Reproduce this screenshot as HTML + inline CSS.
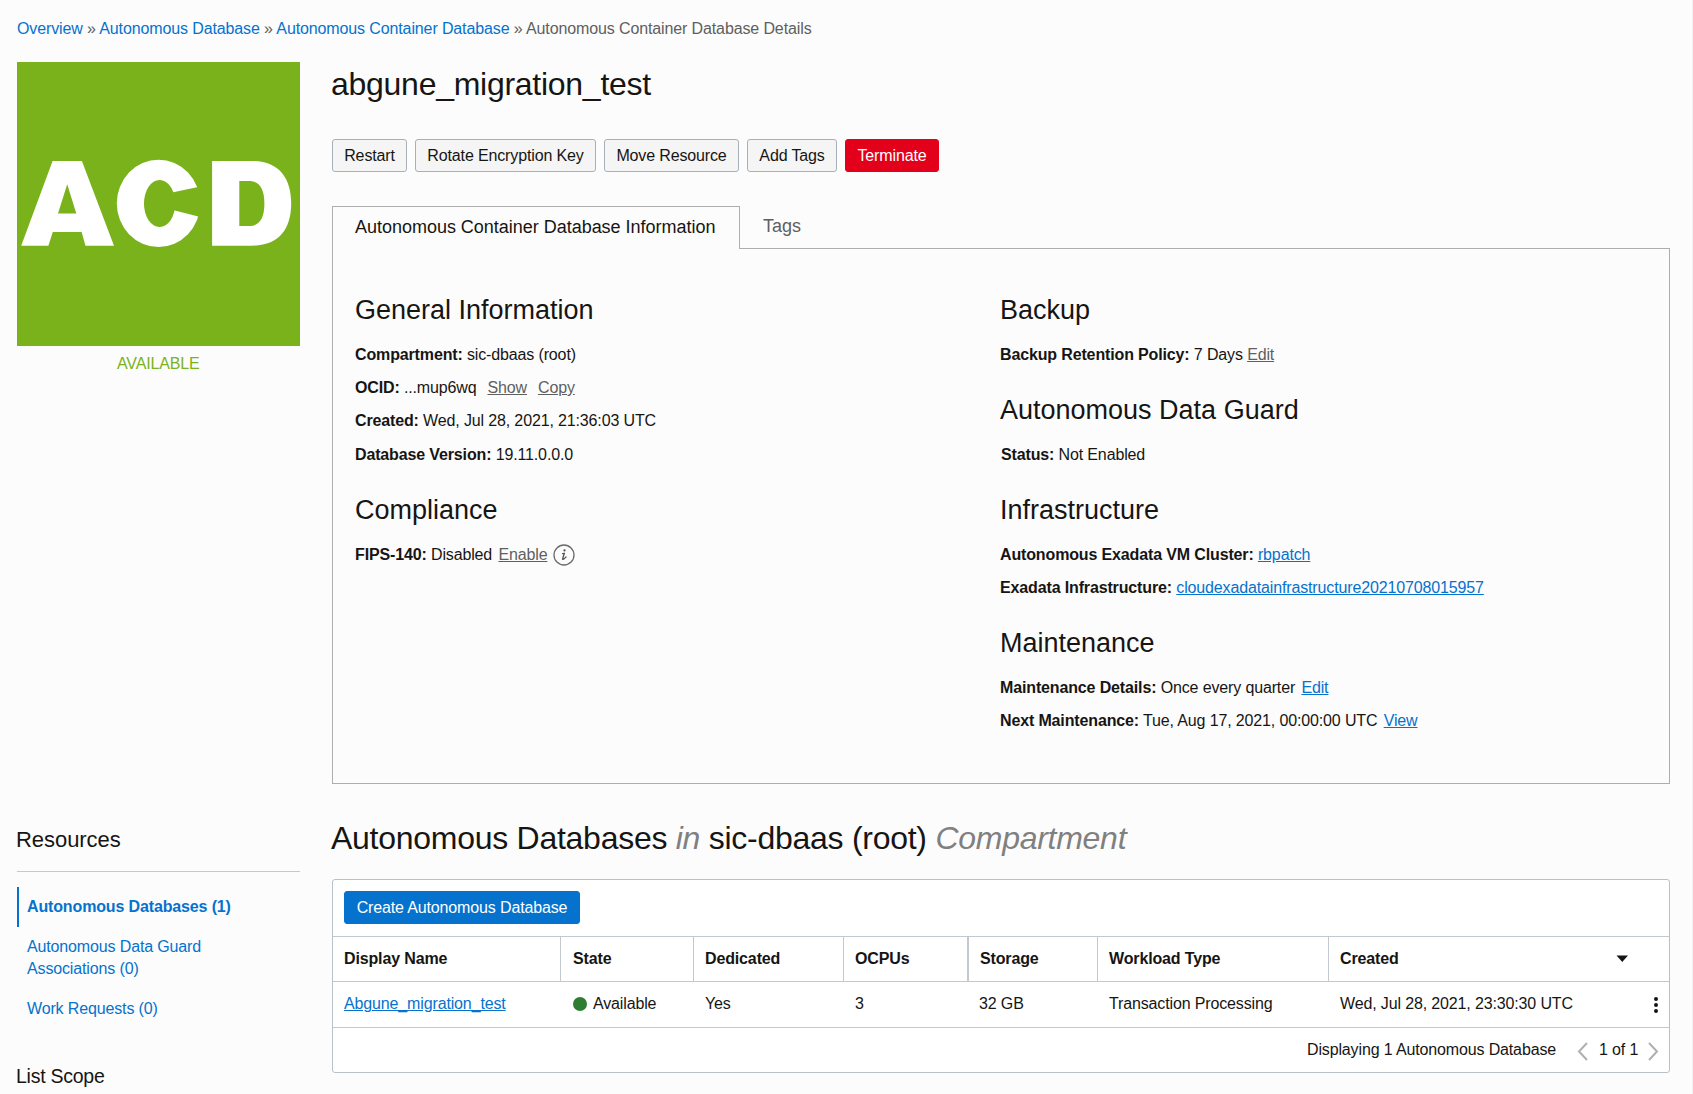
<!DOCTYPE html>
<html><head><meta charset="utf-8"><style>
html,body{margin:0;padding:0;}
body{width:1693px;height:1094px;overflow:hidden;background:#fcfcfc;position:relative;font-family:"Liberation Sans", sans-serif;color:#161513;}
.t{position:absolute;white-space:nowrap;}
.r{position:absolute;}
b{font-weight:700;}
.btn{position:absolute;top:139px;height:33px;box-sizing:border-box;border:1px solid #a9b0b9;border-radius:3px;background:#f5f5f5;color:#161513;font-size:16px;line-height:31px;text-align:center;letter-spacing:-0.14px;white-space:nowrap;}
.btn.red{background:#e2001b;border-color:#e2001b;color:#fff;}
.btn.blue{background:#0572ce;border-color:#0572ce;color:#fff;}
</style></head><body>
<div class="t" style="left:17px;top:21px;font-size:16px;line-height:16px;letter-spacing:-0.12px;"><span style="color:#0572ce">Overview</span><span style="color:#5f5f5f"> » </span><span style="color:#0572ce">Autonomous Database</span><span style="color:#5f5f5f"> » </span><span style="color:#0572ce">Autonomous Container Database</span><span style="color:#5f5f5f"> » </span><span style="color:#5f5f5f">Autonomous Container Database Details</span></div>
<div class="r" style="left:17px;top:62px;width:283px;height:284px;background:#79b21a;"></div>
<svg class="r" style="left:0;top:0" width="320" height="360"><g fill="#fff" fill-rule="evenodd">
<path d="M21.2,245.7 L52.6,160.9 L81.9,160.9 L114,245.7 L85.5,245.7 L81.6,231.9 L52.8,231.9 L48.4,245.7 Z M58,213.6 L76.3,213.6 L67.2,184.3 Z"/>
<ellipse cx="158.5" cy="203.35" rx="41.7" ry="43.65"/>
</g>
<ellipse cx="159.6" cy="203.5" rx="15.6" ry="23.6" fill="#79b21a"/>
<path d="M165,193.9 L210,184.6 L210,219.4 L165,208.1 Z" fill="#79b21a"/>
<path fill="#fff" fill-rule="evenodd" d="M212.1,160.9 L252,160.9 C279,160.9 291.2,178 291.2,203.3 C291.2,229 279,245.7 252,245.7 L212.1,245.7 Z M239.3,181 L249,181 C259,181 264.4,188 264.4,203.5 C264.4,219 259,226.1 249,226.1 L239.3,226.1 Z"/>
</svg>
<div class="t" style="left:117px;top:356px;font-size:16px;line-height:16px;color:#7ab31b;letter-spacing:-0.14px;">AVAILABLE</div>
<div class="t" style="left:331px;top:68px;font-size:32px;line-height:32px;color:#161513;letter-spacing:-0.27px;">abgune_migration_test</div>
<div class="btn" style="left:332px;width:75px;">Restart</div>
<div class="btn" style="left:415px;width:181px;">Rotate Encryption Key</div>
<div class="btn" style="left:604px;width:135px;">Move Resource</div>
<div class="btn" style="left:747px;width:90px;">Add Tags</div>
<div class="btn red" style="left:845px;width:94px;">Terminate</div>
<div class="r" style="left:332px;top:248px;width:1338px;height:536px;border:1px solid #adadad;box-sizing:border-box;"></div>
<div class="r" style="left:332px;top:206px;width:408px;height:43px;border:1px solid #adadad;border-bottom:none;box-sizing:border-box;background:#fcfcfc;"></div>
<div class="t" style="left:355px;top:218px;font-size:18px;line-height:18px;color:#161513;letter-spacing:-0.02px;">Autonomous Container Database Information</div>
<div class="t" style="left:763px;top:217px;font-size:18px;line-height:18px;color:#5f5f5f;">Tags</div>
<div class="t" style="left:355px;top:297px;font-size:27px;line-height:27px;color:#161513;letter-spacing:0px;">General Information</div>
<div class="t" style="left:355px;top:347px;font-size:16px;line-height:16px;color:#161513;letter-spacing:-0.14px;"><b>Compartment:</b> sic-dbaas (root)</div>
<div class="t" style="left:355px;top:380px;font-size:16px;line-height:16px;color:#161513;letter-spacing:-0.14px;"><b>OCID:</b> ...mup6wq<span style="margin-left:11px"></span><span style="color:#5f5f5f;text-decoration:underline;">Show</span><span style="margin-left:11px"></span><span style="color:#5f5f5f;text-decoration:underline;">Copy</span></div>
<div class="t" style="left:355px;top:413px;font-size:16px;line-height:16px;color:#161513;letter-spacing:-0.14px;"><b>Created:</b> Wed, Jul 28, 2021, 21:36:03 UTC</div>
<div class="t" style="left:355px;top:447px;font-size:16px;line-height:16px;color:#161513;letter-spacing:-0.14px;"><b>Database Version:</b> 19.11.0.0.0</div>
<div class="t" style="left:355px;top:497px;font-size:27px;line-height:27px;color:#161513;letter-spacing:0px;">Compliance</div>
<div class="t" style="left:355px;top:547px;font-size:16px;line-height:16px;color:#161513;letter-spacing:-0.14px;"><b>FIPS-140:</b> Disabled <span style="margin-left:2px"></span><span style="color:#5f5f5f;text-decoration:underline;">Enable</span></div>
<svg class="r" style="left:553px;top:544px" width="22" height="22" viewBox="0 0 22 22"><circle cx="11" cy="11" r="10" fill="none" stroke="#6b6b6b" stroke-width="1.3"/><path d="M9.6,9.6 L11.4,9.3 L9.7,14.4 Q9.3,15.7 10.5,15.1 Q11.9,14.2 13.1,12.9" fill="none" stroke="#555" stroke-width="1.35" stroke-linejoin="round" stroke-linecap="round"/><circle cx="11.5" cy="6.4" r="1.15" fill="#555"/></svg>
<div class="t" style="left:1000px;top:297px;font-size:27px;line-height:27px;color:#161513;letter-spacing:0px;">Backup</div>
<div class="t" style="left:1000px;top:347px;font-size:16px;line-height:16px;color:#161513;letter-spacing:-0.14px;"><b>Backup Retention Policy:</b> 7 Days <span style="color:#5f5f5f;text-decoration:underline;">Edit</span></div>
<div class="t" style="left:1000px;top:397px;font-size:27px;line-height:27px;color:#161513;letter-spacing:0px;">Autonomous Data Guard</div>
<div class="t" style="left:1001px;top:447px;font-size:16px;line-height:16px;color:#161513;letter-spacing:-0.14px;"><b>Status:</b> Not Enabled</div>
<div class="t" style="left:1000px;top:497px;font-size:27px;line-height:27px;color:#161513;letter-spacing:0px;">Infrastructure</div>
<div class="t" style="left:1000px;top:547px;font-size:16px;line-height:16px;color:#161513;letter-spacing:-0.14px;"><b>Autonomous Exadata VM Cluster:</b> <span style="color:#0572ce;text-decoration:underline;">rbpatch</span></div>
<div class="t" style="left:1000px;top:580px;font-size:16px;line-height:16px;color:#161513;letter-spacing:-0.14px;"><b>Exadata Infrastructure:</b> <span style="color:#0572ce;text-decoration:underline;">cloudexadatainfrastructure20210708015957</span></div>
<div class="t" style="left:1000px;top:630px;font-size:27px;line-height:27px;color:#161513;letter-spacing:0px;">Maintenance</div>
<div class="t" style="left:1000px;top:680px;font-size:16px;line-height:16px;color:#161513;letter-spacing:-0.14px;"><b>Maintenance Details:</b> Once every quarter <span style="margin-left:2px"></span><span style="color:#0572ce;text-decoration:underline;">Edit</span></div>
<div class="t" style="left:1000px;top:713px;font-size:16px;line-height:16px;color:#161513;letter-spacing:-0.14px;"><b>Next Maintenance:</b> Tue, Aug 17, 2021, 00:00:00 UTC <span style="margin-left:2px"></span><span style="color:#0572ce;text-decoration:underline;">View</span></div>
<div class="t" style="left:16px;top:829px;font-size:22px;line-height:22px;color:#161513;letter-spacing:-0.05px;">Resources</div>
<div class="r" style="left:17px;top:871px;width:283px;height:1px;background:#c3c9d0;"></div>
<div class="r" style="left:17px;top:887px;width:2px;height:40px;background:#0572ce;"></div>
<div class="t" style="left:27px;top:899px;font-size:16px;line-height:16px;font-weight:700;color:#0572ce;letter-spacing:-0.14px;">Autonomous Databases (1)</div>
<div class="t" style="left:27px;top:939px;font-size:16px;line-height:16px;color:#0572ce;letter-spacing:-0.14px;">Autonomous Data Guard</div>
<div class="t" style="left:27px;top:961px;font-size:16px;line-height:16px;color:#0572ce;letter-spacing:-0.14px;">Associations (0)</div>
<div class="t" style="left:27px;top:1001px;font-size:16px;line-height:16px;color:#0572ce;letter-spacing:-0.14px;">Work Requests (0)</div>
<div class="t" style="left:16px;top:1067px;font-size:18px;line-height:18px;color:#161513;letter-spacing:-0.25px;font-size:19.5px;">List Scope</div>
<div class="t" style="left:331px;top:822px;font-size:32px;line-height:32px;color:#161513;letter-spacing:-0.27px;">Autonomous Databases <i style="color:#808080">in</i> sic-dbaas (root) <i style="color:#808080">Compartment</i></div>
<div class="r" style="left:332px;top:879px;width:1338px;height:194px;border:1px solid #b9c0c8;border-radius:3px;box-sizing:border-box;background:#fff;"></div>
<div class="btn blue" style="left:344px;top:891px;width:236px;">Create Autonomous Database</div>
<div class="r" style="left:333px;top:936px;width:1336px;height:1px;background:#c2c8cf;"></div>
<div class="r" style="left:333px;top:981px;width:1336px;height:1px;background:#c2c8cf;"></div>
<div class="r" style="left:333px;top:1027px;width:1336px;height:1px;background:#c2c8cf;"></div>
<div class="r" style="left:560px;top:937px;width:1px;height:44px;background:#c2c8cf;"></div>
<div class="r" style="left:693px;top:937px;width:1px;height:44px;background:#c2c8cf;"></div>
<div class="r" style="left:843px;top:937px;width:1px;height:44px;background:#c2c8cf;"></div>
<div class="r" style="left:967px;top:937px;width:1px;height:44px;background:#c2c8cf;"></div>
<div class="r" style="left:1097px;top:937px;width:1px;height:44px;background:#c2c8cf;"></div>
<div class="r" style="left:1328px;top:937px;width:1px;height:44px;background:#c2c8cf;"></div>
<div class="r" style="left:968px;top:937px;width:1px;height:44px;background:#c2c8cf;"></div>
<div class="t" style="left:344px;top:951px;font-size:16px;line-height:16px;font-weight:700;color:#161513;letter-spacing:-0.14px;">Display Name</div>
<div class="t" style="left:573px;top:951px;font-size:16px;line-height:16px;font-weight:700;color:#161513;letter-spacing:-0.14px;">State</div>
<div class="t" style="left:705px;top:951px;font-size:16px;line-height:16px;font-weight:700;color:#161513;letter-spacing:-0.14px;">Dedicated</div>
<div class="t" style="left:855px;top:951px;font-size:16px;line-height:16px;font-weight:700;color:#161513;letter-spacing:-0.14px;">OCPUs</div>
<div class="t" style="left:980px;top:951px;font-size:16px;line-height:16px;font-weight:700;color:#161513;letter-spacing:-0.14px;">Storage</div>
<div class="t" style="left:1109px;top:951px;font-size:16px;line-height:16px;font-weight:700;color:#161513;letter-spacing:-0.14px;">Workload Type</div>
<div class="t" style="left:1340px;top:951px;font-size:16px;line-height:16px;font-weight:700;color:#161513;letter-spacing:-0.14px;">Created</div>
<svg class="r" style="left:1616px;top:955px" width="13" height="8"><path d="M0.5 0.5 L12 0.5 L6.25 7 Z" fill="#161513"/></svg>
<div class="t" style="left:344px;top:996px;font-size:16px;line-height:16px;letter-spacing:-0.14px;"><span style="color:#0572ce;text-decoration:underline;">Abgune_migration_test</span></div>
<div class="r" style="left:573px;top:997px;width:14px;height:14px;background:#2f7d32;border-radius:50%;"></div>
<div class="t" style="left:593px;top:996px;font-size:16px;line-height:16px;color:#161513;letter-spacing:-0.14px;">Available</div>
<div class="t" style="left:705px;top:996px;font-size:16px;line-height:16px;color:#161513;letter-spacing:-0.14px;">Yes</div>
<div class="t" style="left:855px;top:996px;font-size:16px;line-height:16px;color:#161513;letter-spacing:-0.14px;">3</div>
<div class="t" style="left:979px;top:996px;font-size:16px;line-height:16px;color:#161513;letter-spacing:-0.14px;">32 GB</div>
<div class="t" style="left:1109px;top:996px;font-size:16px;line-height:16px;color:#161513;letter-spacing:-0.14px;">Transaction Processing</div>
<div class="t" style="left:1340px;top:996px;font-size:16px;line-height:16px;color:#161513;letter-spacing:-0.14px;">Wed, Jul 28, 2021, 23:30:30 UTC</div>
<div class="r" style="left:1654px;top:996.5px;width:4px;height:4px;background:#161513;border-radius:50%;"></div>
<div class="r" style="left:1654px;top:1002.5px;width:4px;height:4px;background:#161513;border-radius:50%;"></div>
<div class="r" style="left:1654px;top:1008.5px;width:4px;height:4px;background:#161513;border-radius:50%;"></div>
<div class="t" style="left:1307px;top:1042px;font-size:16px;line-height:16px;color:#161513;letter-spacing:-0.14px;">Displaying 1 Autonomous Database</div>
<div class="t" style="left:1599px;top:1042px;font-size:16px;line-height:16px;color:#161513;letter-spacing:-0.14px;">1 of 1</div>
<svg class="r" style="left:1575px;top:1041px" width="16" height="21"><path d="M12 2 L4 10.5 L12 19" fill="none" stroke="#b0b0b0" stroke-width="2"/></svg>
<svg class="r" style="left:1645px;top:1041px" width="16" height="21"><path d="M4 2 L12 10.5 L4 19" fill="none" stroke="#b0b0b0" stroke-width="2"/></svg>
<div class="r" style="left:1692px;top:0px;width:1px;height:1094px;background:#f1f1f1;"></div>
</body></html>
